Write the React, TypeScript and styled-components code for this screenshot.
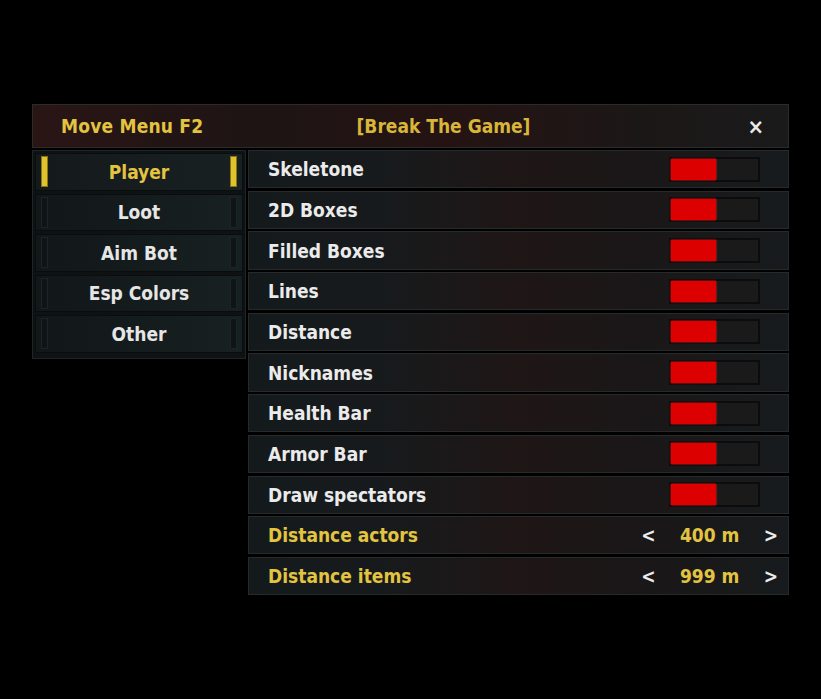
import styled, { createGlobalStyle } from "styled-components";

const GlobalStyle = createGlobalStyle`
  html, body {
    margin: 0;
    padding: 0;
    background: #000;
  }
  body {
    font-family: "DejaVu Sans Condensed", "DejaVu Sans", sans-serif;
  }
`;

const tabs = ["Player", "Loot", "Aim Bot", "Esp Colors", "Other"];

const toggles = [
  "Skeletone",
  "2D Boxes",
  "Filled Boxes",
  "Lines",
  "Distance",
  "Nicknames",
  "Health Bar",
  "Armor Bar",
  "Draw spectators",
];

const sliders = [
  { label: "Distance actors", value: "400 m" },
  { label: "Distance items", value: "999 m" },
];

const App = () => {
  return (
    <Page>
      <GlobalStyle />
      <Panel>
        <Header>
          <Title>Move Menu F2</Title>
          <Brand>[Break The Game]</Brand>
          <Close>×</Close>
        </Header>
        <Body>
          <Sidebar>
            {tabs.map((tab, i) => (
              <Tab key={tab} $active={i === 0}>
                <Marker $active={i === 0} />
                <TabLabel $active={i === 0}>{tab}</TabLabel>
                <Marker $active={i === 0} />
              </Tab>
            ))}
          </Sidebar>
          <Content>
            {toggles.map((label) => (
              <Row key={label}>
                <Label>{label}</Label>
                <Toggle>
                  <ToggleFill />
                </Toggle>
              </Row>
            ))}
            {sliders.map((s) => (
              <Row key={s.label}>
                <Label $gold>{s.label}</Label>
                <Stepper>
                  <Arrow>&lt;</Arrow>
                  <Value>{s.value}</Value>
                  <Arrow>&gt;</Arrow>
                </Stepper>
              </Row>
            ))}
          </Content>
        </Body>
      </Panel>
    </Page>
  );
};

export default App;

const Page = styled.div`
  width: 821px;
  height: 699px;
  background: #000;
  padding-top: 104px;
  padding-left: 32px;
  box-sizing: border-box;
`;

const Panel = styled.div`
  width: 757px;
  display: flex;
  flex-direction: column;
  gap: 2px;
`;

const Header = styled.div`
  height: 44px;
  display: flex;
  align-items: center;
  padding: 0 24px 0 28px;
  box-sizing: border-box;
  border: 1px solid #2b2b2b;
  background: linear-gradient(
    90deg,
    #2a1515 0%,
    #1e1414 30%,
    #251313 55%,
    #1c1717 80%,
    #1a1a1b 100%
  );
`;

const Title = styled.div`
  flex: 1;
  color: #e3c441;
  font-size: 19px;
  font-weight: bold;
  letter-spacing: 0.2px;
`;

const Brand = styled.div`
  flex: 1;
  text-align: center;
  color: #d7b63a;
  font-size: 19px;
  font-weight: bold;
  margin-left: 62px;
`;

const Close = styled.div`
  flex: 1;
  text-align: right;
  color: #eaeaea;
  font-size: 22px;
  font-weight: bold;
`;

const Body = styled.div`
  display: flex;
  align-items: flex-start;
  gap: 2px;
`;

const Sidebar = styled.div`
  width: 214px;
  box-sizing: border-box;
  padding: 2px 2px 5px 2px;
  display: flex;
  flex-direction: column;
  gap: 3px;
  background: #0e1213;
  border: 1px solid #1f2526;
`;

const Tab = styled.div<{ $active?: boolean }>`
  height: 37.5px;
  display: flex;
  align-items: center;
  justify-content: space-between;
  padding: 0 5px;
  box-sizing: border-box;
  background: ${(p) =>
    p.$active
      ? "linear-gradient(90deg, #141a1b, #192022)"
      : "linear-gradient(90deg, #121718, #172022)"};
  border: 1px solid #0a0d0e;
`;

const Marker = styled.div<{ $active?: boolean }>`
  width: 7px;
  height: 31px;
  box-sizing: border-box;
  background: ${(p) => (p.$active ? "#e0c22b" : "#0f1416")};
  border: 1px solid ${(p) => (p.$active ? "#8a741a" : "#1d2426")};
`;

const TabLabel = styled.div<{ $active?: boolean }>`
  color: ${(p) => (p.$active ? "#e3c441" : "#e6e6e6")};
  font-size: 19px;
  font-weight: bold;
`;

const Content = styled.div`
  flex: 1;
  display: flex;
  flex-direction: column;
  gap: 2.4px;
`;

const Row = styled.div`
  height: 38.3px;
  display: flex;
  align-items: center;
  justify-content: space-between;
  padding: 0 10px 0 19px;
  box-sizing: border-box;
  border: 1px solid #262a2b;
  background: linear-gradient(
    90deg,
    #141a1c 0%,
    #171a1c 25%,
    #1f1616 50%,
    #1a1718 75%,
    #171b1d 100%
  );
`;

const Label = styled.div<{ $gold?: boolean }>`
  color: ${(p) => (p.$gold ? "#e3c441" : "#ebebeb")};
  font-size: 19px;
  font-weight: bold;
`;

const Toggle = styled.div`
  width: 91px;
  height: 25px;
  margin-right: 18px;
  display: flex;
  box-sizing: border-box;
  background: #1a1a1a;
  border: 2px solid #0c0c0c;
`;

const ToggleFill = styled.div`
  width: 45px;
  height: 100%;
  background: #dc0000;
  box-shadow: 0 0 2px #ff1a1a;
`;

const Stepper = styled.div`
  display: flex;
  align-items: center;
`;

const Arrow = styled.span`
  color: #ececec;
  font-size: 19px;
  font-weight: bold;
`;

const Value = styled.span`
  width: 108px;
  text-align: center;
  color: #e3c441;
  font-size: 19px;
  font-weight: bold;
`;
